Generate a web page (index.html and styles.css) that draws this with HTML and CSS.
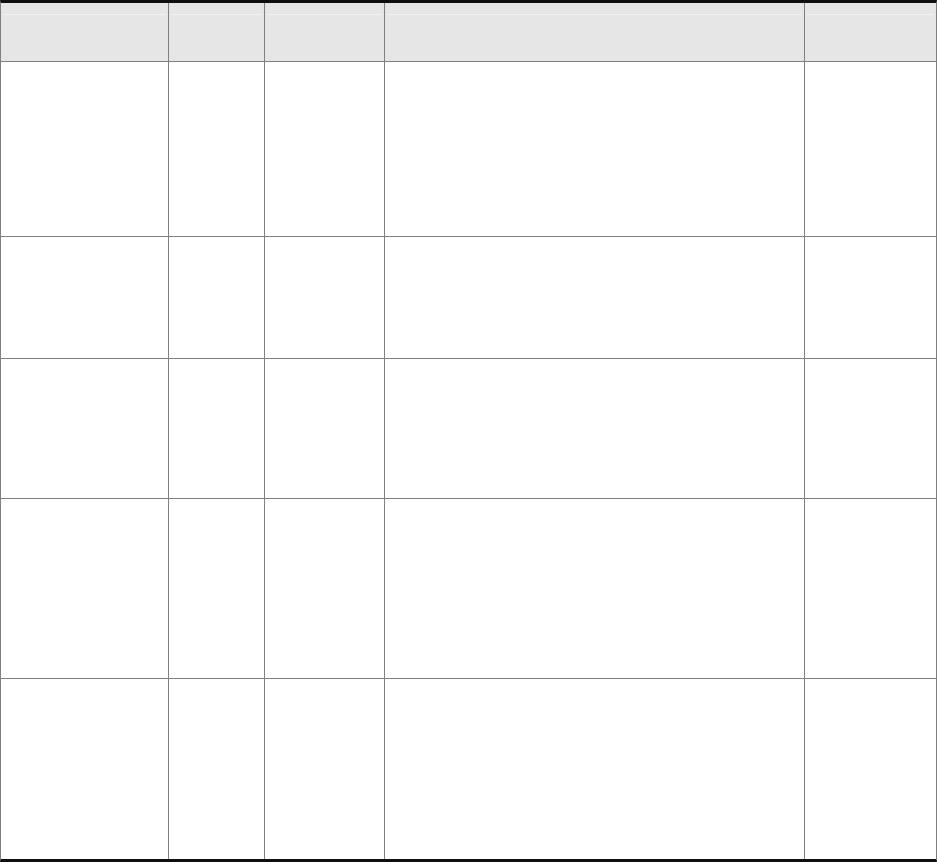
FILE: index.html
```html
<!DOCTYPE html>
<html lang="en">
<head>
<meta charset="utf-8">
<title>Table</title>
<link rel="stylesheet" href="styles.css">
</head>
<body>
<div class="table">
  <div class="cell head"><div class="rule"></div></div>
  <div class="cell head"><div class="rule"></div></div>
  <div class="cell head"><div class="rule"></div></div>
  <div class="cell head"><div class="rule"></div></div>
  <div class="cell head last"><div class="rule"></div></div>

  <div class="cell r1"></div><div class="cell r1"></div><div class="cell r1"></div><div class="cell r1"></div><div class="cell r1 last"></div>
  <div class="cell r2"></div><div class="cell r2"></div><div class="cell r2"></div><div class="cell r2"></div><div class="cell r2 last"></div>
  <div class="cell r3"></div><div class="cell r3"></div><div class="cell r3"></div><div class="cell r3"></div><div class="cell r3 last"></div>
  <div class="cell r4"></div><div class="cell r4"></div><div class="cell r4"></div><div class="cell r4"></div><div class="cell r4 last"></div>
  <div class="cell r5 end"></div><div class="cell r5 end"></div><div class="cell r5 end"></div><div class="cell r5 end"></div><div class="cell r5 end last"></div>
</div>
</body>
</html>
```

FILE: styles.css
```css
html, body {
  margin: 0;
  padding: 0;
  background: #ffffff;
  font-family: "Liberation Sans", Arial, sans-serif;
}

.table {
  width: 937px;
  box-sizing: border-box;
  display: grid;
  grid-template-columns: 168px 96px 120px 420px 131px;
  border-top: 3px solid #0f0f0f;
  border-bottom: 3px solid #0f0f0f;
  border-left: 1px solid #7f7f7f;
  border-right: 1px solid #7f7f7f;
}

.cell {
  box-sizing: border-box;
  border-right: 1px solid #7f7f7f;
  border-bottom: 1px solid #7f7f7f;
  background: #ffffff;
}

.cell.last {
  border-right: none;
}

.cell.end {
  border-bottom: none;
}

.head {
  height: 59px;
  background: #e6e6e6;
  padding: 11px 2px 0 2px;
}

.rule {
  height: 1px;
  background: #f1f1f1;
}

.r1 { height: 175px; }
.r2 { height: 122px; }
.r3 { height: 140px; }
.r4 { height: 180px; }
.r5 { height: 180px; }
```
